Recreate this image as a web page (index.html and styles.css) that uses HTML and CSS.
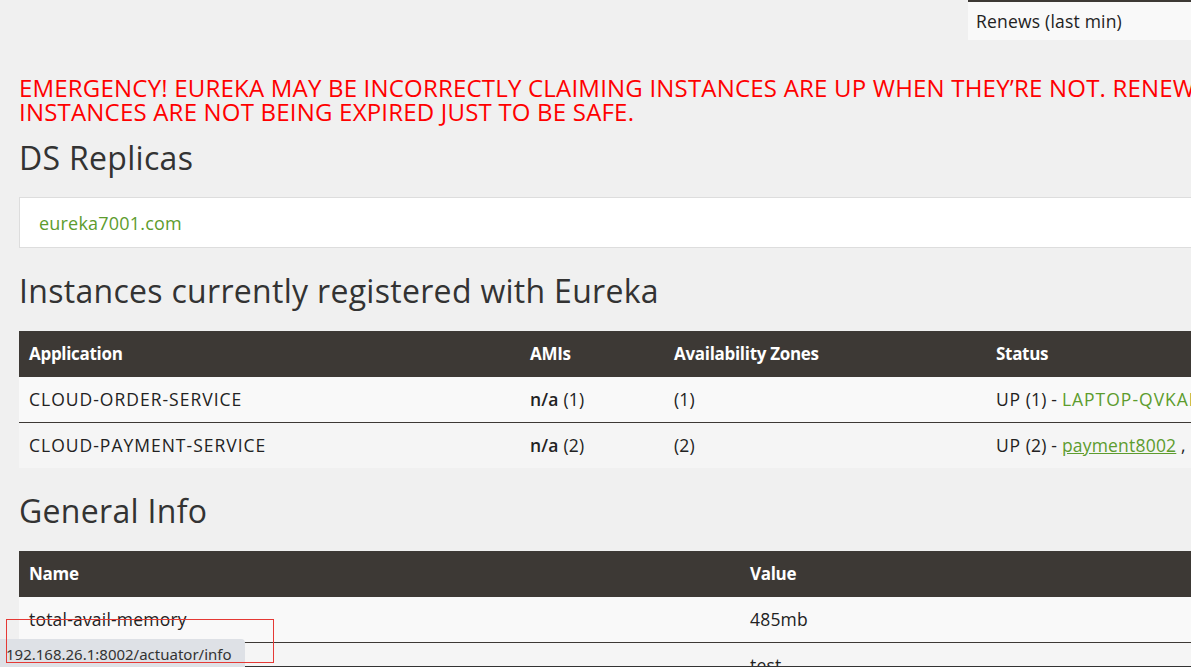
FILE: index.html
```html
<!DOCTYPE html>
<html>
<head>
<meta charset="utf-8">
<link rel="stylesheet" href="styles.css">
</head>
<body>
<div class="page">
  <div class="top-row">
    <table class="stats">
      <tr><td>Renews (last min)</td></tr>
    </table>
  </div>

  <h4 class="emergency">EMERGENCY! EUREKA MAY BE INCORRECTLY CLAIMING INSTANCES ARE UP WHEN THEY’RE NOT. RENEWALS ARE LESSER THAN THRESHOLD AND HENCE THE<br>INSTANCES ARE NOT BEING EXPIRED JUST TO BE SAFE.</h4>

  <h1 class="title ds">DS Replicas</h1>
  <ul class="replicas">
    <li><a class="green" href="#">eureka7001.com</a></li>
  </ul>

  <h1 class="title inst">Instances currently registered with Eureka</h1>
  <table class="grid instances">
    <thead>
      <tr><th class="c-app">Application</th><th class="c-ami">AMIs</th><th class="c-az">Availability Zones</th><th class="c-st">Status</th></tr>
    </thead>
    <tbody>
      <tr class="r1"><td><span class="caps">CLOUD-ORDER-SERVICE</span></td><td><b>n/a</b> (1)</td><td>(1)</td><td><span class="up">UP</span> (1) - <a class="green caps" href="#">LAPTOP-QVKAL3KH:cloud-order-service:80</a></td></tr>
      <tr class="r2"><td><span class="caps">CLOUD-PAYMENT-SERVICE</span></td><td><b>n/a</b> (2)</td><td>(2)</td><td><span class="up">UP</span> (2) - <a class="green ul" href="#">payment8002</a> , <a class="green ul" href="#">payment8001</a></td></tr>
    </tbody>
  </table>

  <h1 class="title gen">General Info</h1>
  <table class="grid general">
    <thead>
      <tr><th class="c-name">Name</th><th>Value</th></tr>
    </thead>
    <tbody>
      <tr class="r1"><td>total-avail-memory</td><td>485mb</td></tr>
      <tr class="r2"><td>environment</td><td>test</td></tr>
    </tbody>
  </table>
</div>

<div class="statusbar">192.168.26.1:8002/actuator/info</div>
<div class="annot"></div>
<div class="edge"></div>
</body>
</html>
```

FILE: styles.css
```css
html, body {
  margin: 0;
  padding: 0;
  overflow: hidden;
  background: #f0f0f0;
}
body {
  width: 1191px;
  height: 667px;
  position: relative;
  font-family: "Open Sans", "Noto Sans", sans-serif;
  color: #333;
}
.page {
  width: 1500px;
  padding: 0 0 0 19px;
}
.top-row {
  display: flex;
  padding-left: 949px;
}
.stats {
  border-collapse: collapse;
  width: 400px;
  border-top: 2px solid #3d3935;
}
.stats td {
  background: #f9f9f9;
  height: 38px;
  padding: 0 8px;
  font-size: 17.5px;
  line-height: 38px;
  letter-spacing: 0.2px;
  color: #222;
}
.emergency {
  margin: 36px 0 0 0;
  color: #ff0000;
  font-size: 24px;
  font-weight: 400;
  line-height: 24px;
  letter-spacing: 0.2px;
  white-space: nowrap;
}
.title {
  margin: 0;
  font-weight: 400;
  font-size: 32px;
  line-height: 36px;
  letter-spacing: 0.3px;
  color: #333;
}
.ds { margin-top: 16px; }
.replicas {
  list-style: none;
  margin: 21px 0 0 0;
  padding: 0 19px;
  background: #fff;
  border: 1px solid #ddd;
  width: 1400px;
  height: 49px;
  display: flex;
  align-items: center;
}
.replicas li { font-size: 18px; letter-spacing: 0.2px; }
.green { color: #5d9c2e; text-decoration: none; }
.green.ul { text-decoration: underline; }
.inst { margin-top: 25px; }
.gen { margin-top: 25px; }
.grid {
  border-collapse: collapse;
  table-layout: fixed;
  width: 1450px;
}
.instances { margin-top: 22px; }
.general { margin-top: 22px; }
.grid th {
  background: #3d3935;
  color: #fff;
  text-align: left;
  font-weight: 700;
  font-size: 17px;
  height: 44px;
  padding: 0 10px 2px;
  letter-spacing: -0.3px;
}
.grid td {
  height: 43px;
  padding: 0 10px 2px;
  white-space: nowrap;
  color: #222;
  font-size: 17.5px;
  letter-spacing: 0.2px;
}
.grid tr.r1 td { background: #f9f9f9; border-bottom: 1px solid #3d3935; }
.grid tr.r2 td { background: #f5f5f5; }
.grid b { font-weight: 600; }
.caps { letter-spacing: 1px; }
.up { letter-spacing: 0.8px; }
.c-app { width: 481px; }
.c-ami { width: 124px; }
.c-az { width: 302px; }
.c-name { width: 701px; }

.statusbar {
  position: absolute;
  left: 0;
  top: 639px;
  bottom: 0;
  width: 239px;
  padding-left: 6px;
  background: #dee1e6;
  border-top-right-radius: 4px;
  font-family: "Noto Sans", "Open Sans", sans-serif;
  font-size: 15px;
  line-height: 30px;
  color: #333;
}
.annot {
  position: absolute;
  left: 6px;
  top: 619px;
  width: 266px;
  height: 42px;
  border: 1px solid #e53935;
}
.edge {
  position: absolute;
  left: 245px;
  right: 0;
  bottom: 0;
  height: 1px;
  background: #333;
}
```
